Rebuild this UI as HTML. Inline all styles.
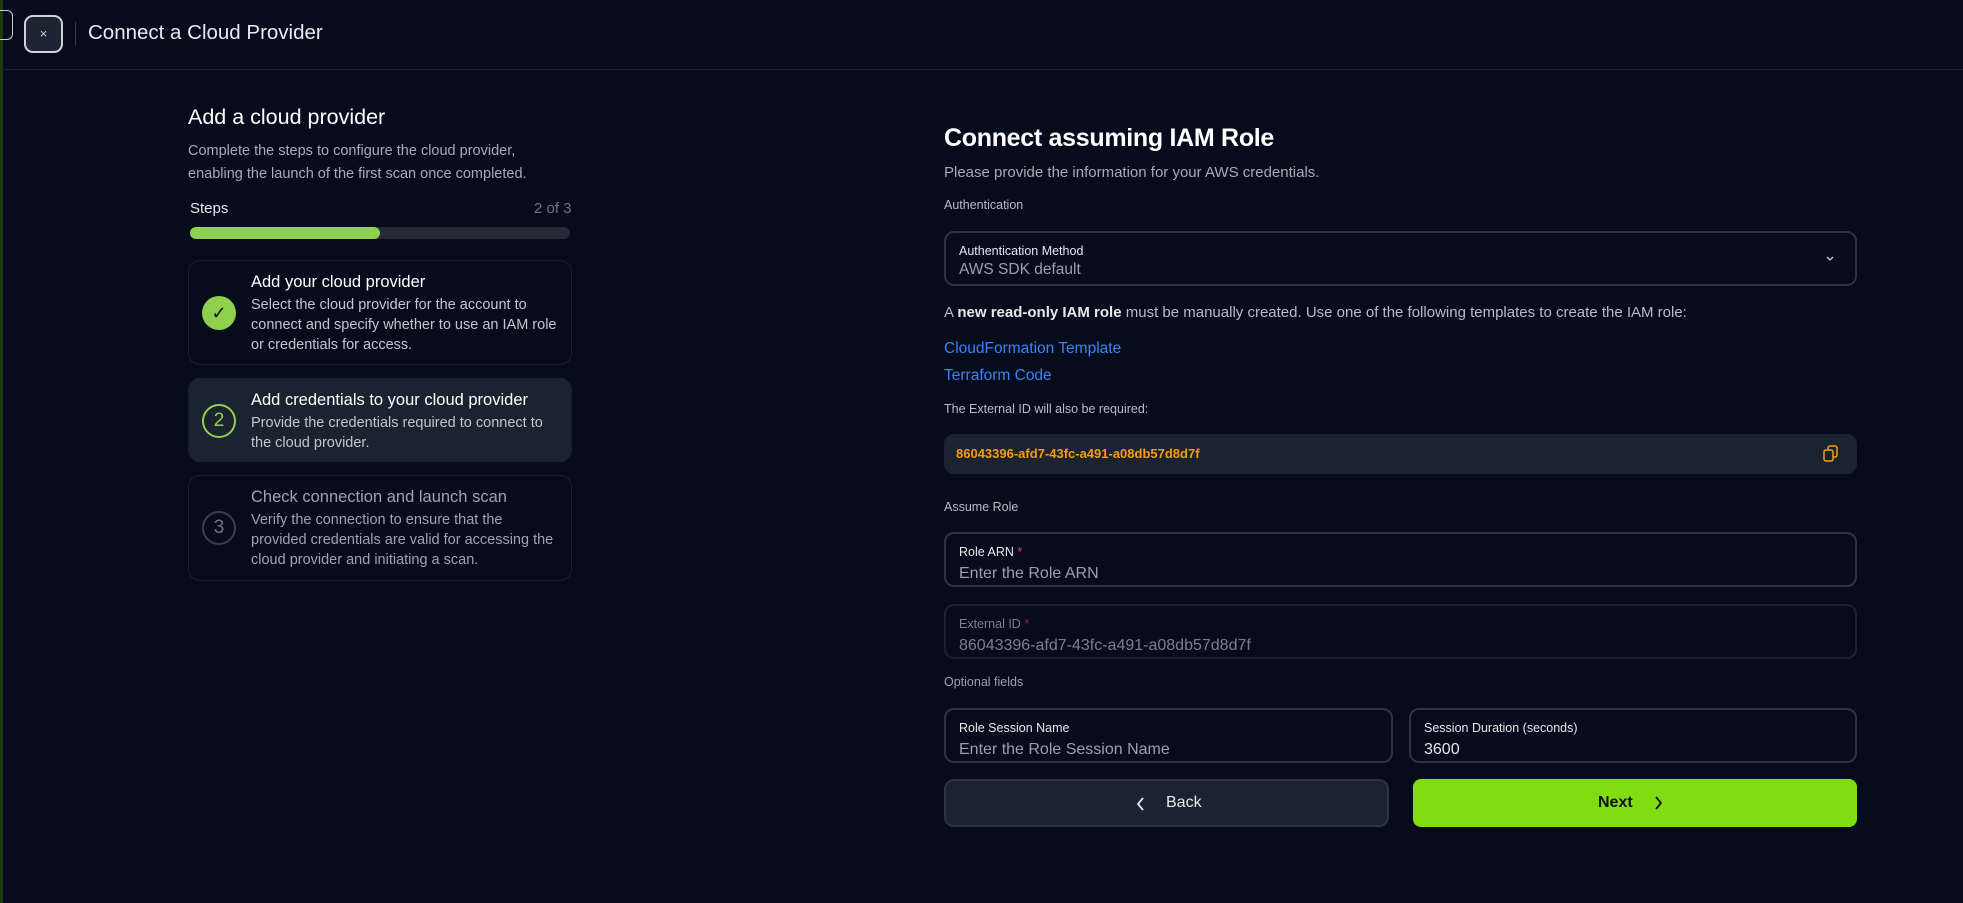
<!DOCTYPE html>
<html><head><meta charset="utf-8"><style>
*{box-sizing:border-box;margin:0;padding:0}
body{width:1963px;height:903px;background:#070c1d;font-family:"Liberation Sans",sans-serif;color:#fff;position:relative;overflow:hidden}
.a{position:absolute}
.lbl{font-size:12.5px;color:#e6e8ec}
.box{position:absolute;border:2px solid #2f333d;border-radius:10px}
.box .l{position:absolute;left:13px;top:11px;font-size:12.5px;color:#e6e8ec}
.box .v{position:absolute;left:13px;top:31px;font-size:16px;color:#9aa0aa}
.card{position:absolute;left:188px;width:384px;border:1px solid #1a1f2c;border-radius:12px}
.card h3{position:absolute;left:62px;font-size:16.5px;font-weight:normal}
.card p{position:absolute;left:62px;width:310px;font-size:14.5px;line-height:20px;color:#c2c6cd}
.circ{position:absolute;left:13px;width:34px;height:34px;border-radius:50%;text-align:center;line-height:30px;font-size:19px}
</style></head><body>
<div class="a" style="left:0;top:0;width:3px;height:903px;background:#1d3a12"></div>
<div class="a" style="left:-10px;top:10px;width:23px;height:30px;border:1.5px solid #ccc;border-radius:6px"></div>
<div class="a" style="left:24px;top:15px;width:39px;height:38px;border:2px solid #d0d3d8;border-radius:9px;background:#1d2533;text-align:center;line-height:34px;font-size:13px;color:#ccc">×</div>
<div class="a" style="left:75px;top:22px;width:1px;height:24px;background:#333a48"></div>
<div class="a" style="left:88px;top:21px;font-size:20.5px;color:#e8eaee">Connect a Cloud Provider</div>
<div class="a" style="left:0;top:69px;width:1963px;height:1px;background:#1f2533"></div>

<div class="a" style="left:188px;top:105px;font-size:21.5px">Add a cloud provider</div>
<div class="a" style="left:188px;top:140px;font-size:14.5px;line-height:23px;color:#a6abb4">Complete the steps to configure the cloud provider,<br>enabling the launch of the first scan once completed.</div>
<div class="a" style="left:190px;top:200px;font-size:15px;color:#e6e8ec">Steps</div>
<div class="a" style="left:534px;top:200px;font-size:15px;color:#6e7480">2 of 3</div>
<div class="a" style="left:190px;top:227px;width:380px;height:12px;border-radius:6px;background:#262a36"></div>
<div class="a" style="left:190px;top:227px;width:190px;height:12px;border-radius:6px;background:#8fd14f"></div>

<div class="card" style="top:260px;height:105px">
<div class="circ" style="top:35px;background:#8fd14f;color:#111;font-size:18px;line-height:34px">✓</div>
<h3 style="top:12px">Add your cloud provider</h3>
<p style="top:34px">Select the cloud provider for the account to connect and specify whether to use an IAM role or credentials for access.</p></div>
<div class="card" style="top:378px;height:84px;background:#1b2230">
<div class="circ" style="top:25px;border:2px solid #8fd14f;color:#8fd14f">2</div>
<h3 style="top:12px">Add credentials to your cloud provider</h3>
<p style="top:34px">Provide the credentials required to connect to the cloud provider.</p></div>
<div class="card" style="top:475px;height:106px">
<div class="circ" style="top:35px;border:2px solid #3a3f4a;color:#707682">3</div>
<h3 style="top:12px;color:#9ea3ac">Check connection and launch scan</h3>
<p style="top:34px;color:#9ea3ac">Verify the connection to ensure that the provided credentials are valid for accessing the cloud provider and initiating a scan.</p></div>

<div class="a" style="left:944px;top:124px;font-size:25px;font-weight:bold;letter-spacing:-0.3px">Connect assuming IAM Role</div>
<div class="a" style="left:944px;top:164px;font-size:15px;color:#a6abb4">Please provide the information for your AWS credentials.</div>
<div class="a lbl" style="left:944px;top:198px;color:#b8bcc4">Authentication</div>
<div class="box" style="left:944px;top:231px;width:913px;height:55px"><span class="l">Authentication Method</span><span class="v" style="top:28px;font-size:15.5px">AWS SDK default</span>
<svg class="a" style="right:20px;top:22px" width="10" height="8" viewBox="0 0 10 8" fill="none" stroke="#ccc" stroke-width="1.3"><path d="M2 2l3 3 3-3"/></svg></div>
<div class="a" style="left:944px;top:304px;font-size:15px;color:#b8bcc4">A <b style="color:#e6e8ec">new read-only IAM role</b> must be manually created. Use one of the following templates to create the IAM role:</div>
<div class="a" style="left:944px;top:340px;font-size:15.5px;color:#3b82f6">CloudFormation Template</div>
<div class="a" style="left:944px;top:367px;font-size:15.5px;color:#3b82f6">Terraform Code</div>
<div class="a lbl" style="left:944px;top:402px;color:#b8bcc4">The External ID will also be required:</div>
<div class="a" style="left:944px;top:434px;width:913px;height:40px;border-radius:10px;background:#1b2230"><span class="a" style="left:12px;top:12px;font-size:13px;font-weight:bold;color:#f59e0b">86043396-afd7-43fc-a491-a08db57d8d7f</span>
<svg class="a" style="right:18px;top:11px" width="16" height="18" viewBox="0 0 16 18" fill="none" stroke="#f59e0b" stroke-width="1.5"><rect x="1" y="5" width="9" height="11" rx="2"/><path d="M5 5V3a2 2 0 0 1 2-2h5a2 2 0 0 1 2 2v7a2 2 0 0 1-2 2h-2"/></svg></div>
<div class="a lbl" style="left:944px;top:500px;color:#b8bcc4">Assume Role</div>
<div class="box" style="left:944px;top:532px;width:913px;height:55px"><span class="l">Role ARN <span style="color:#e0406a">*</span></span><span class="v">Enter the Role ARN</span></div>
<div class="box" style="left:944px;top:604px;width:913px;height:55px;border-color:#1d222d"><span class="l" style="color:#7a808a">External ID <span style="color:#7a2a3c">*</span></span><span class="v" style="color:#7a808a">86043396-afd7-43fc-a491-a08db57d8d7f</span></div>
<div class="a" style="left:944px;top:675px;font-size:12.5px;color:#9aa0aa">Optional fields</div>
<div class="box" style="left:944px;top:708px;width:449px;height:55px"><span class="l">Role Session Name</span><span class="v">Enter the Role Session Name</span></div>
<div class="box" style="left:1409px;top:708px;width:448px;height:55px"><span class="l">Session Duration (seconds)</span><span class="v" style="color:#e6e8ec">3600</span></div>
<div class="a" style="left:944px;top:779px;width:445px;height:48px;border:2px solid #2f333d;border-radius:10px;background:#1b2230;font-size:16px;color:#e6e8ec">
<svg class="a" style="left:190px;top:15px" width="10" height="16" viewBox="0 0 10 16" fill="none" stroke="#e6e8ec" stroke-width="1.8"><path d="M7 2L2 8l5 6"/></svg>
<span class="a" style="left:220px;top:13px">Back</span></div>
<div class="a" style="left:1413px;top:779px;width:444px;height:48px;border-radius:8px;background:#80dd12;font-size:16px;font-weight:bold;color:#111">
<span class="a" style="left:185px;top:15px">Next</span>
<svg class="a" style="left:240px;top:16px" width="10" height="16" viewBox="0 0 10 16" fill="none" stroke="#111" stroke-width="1.8"><path d="M3 2l5 6-5 6"/></svg></div>
</body></html>
